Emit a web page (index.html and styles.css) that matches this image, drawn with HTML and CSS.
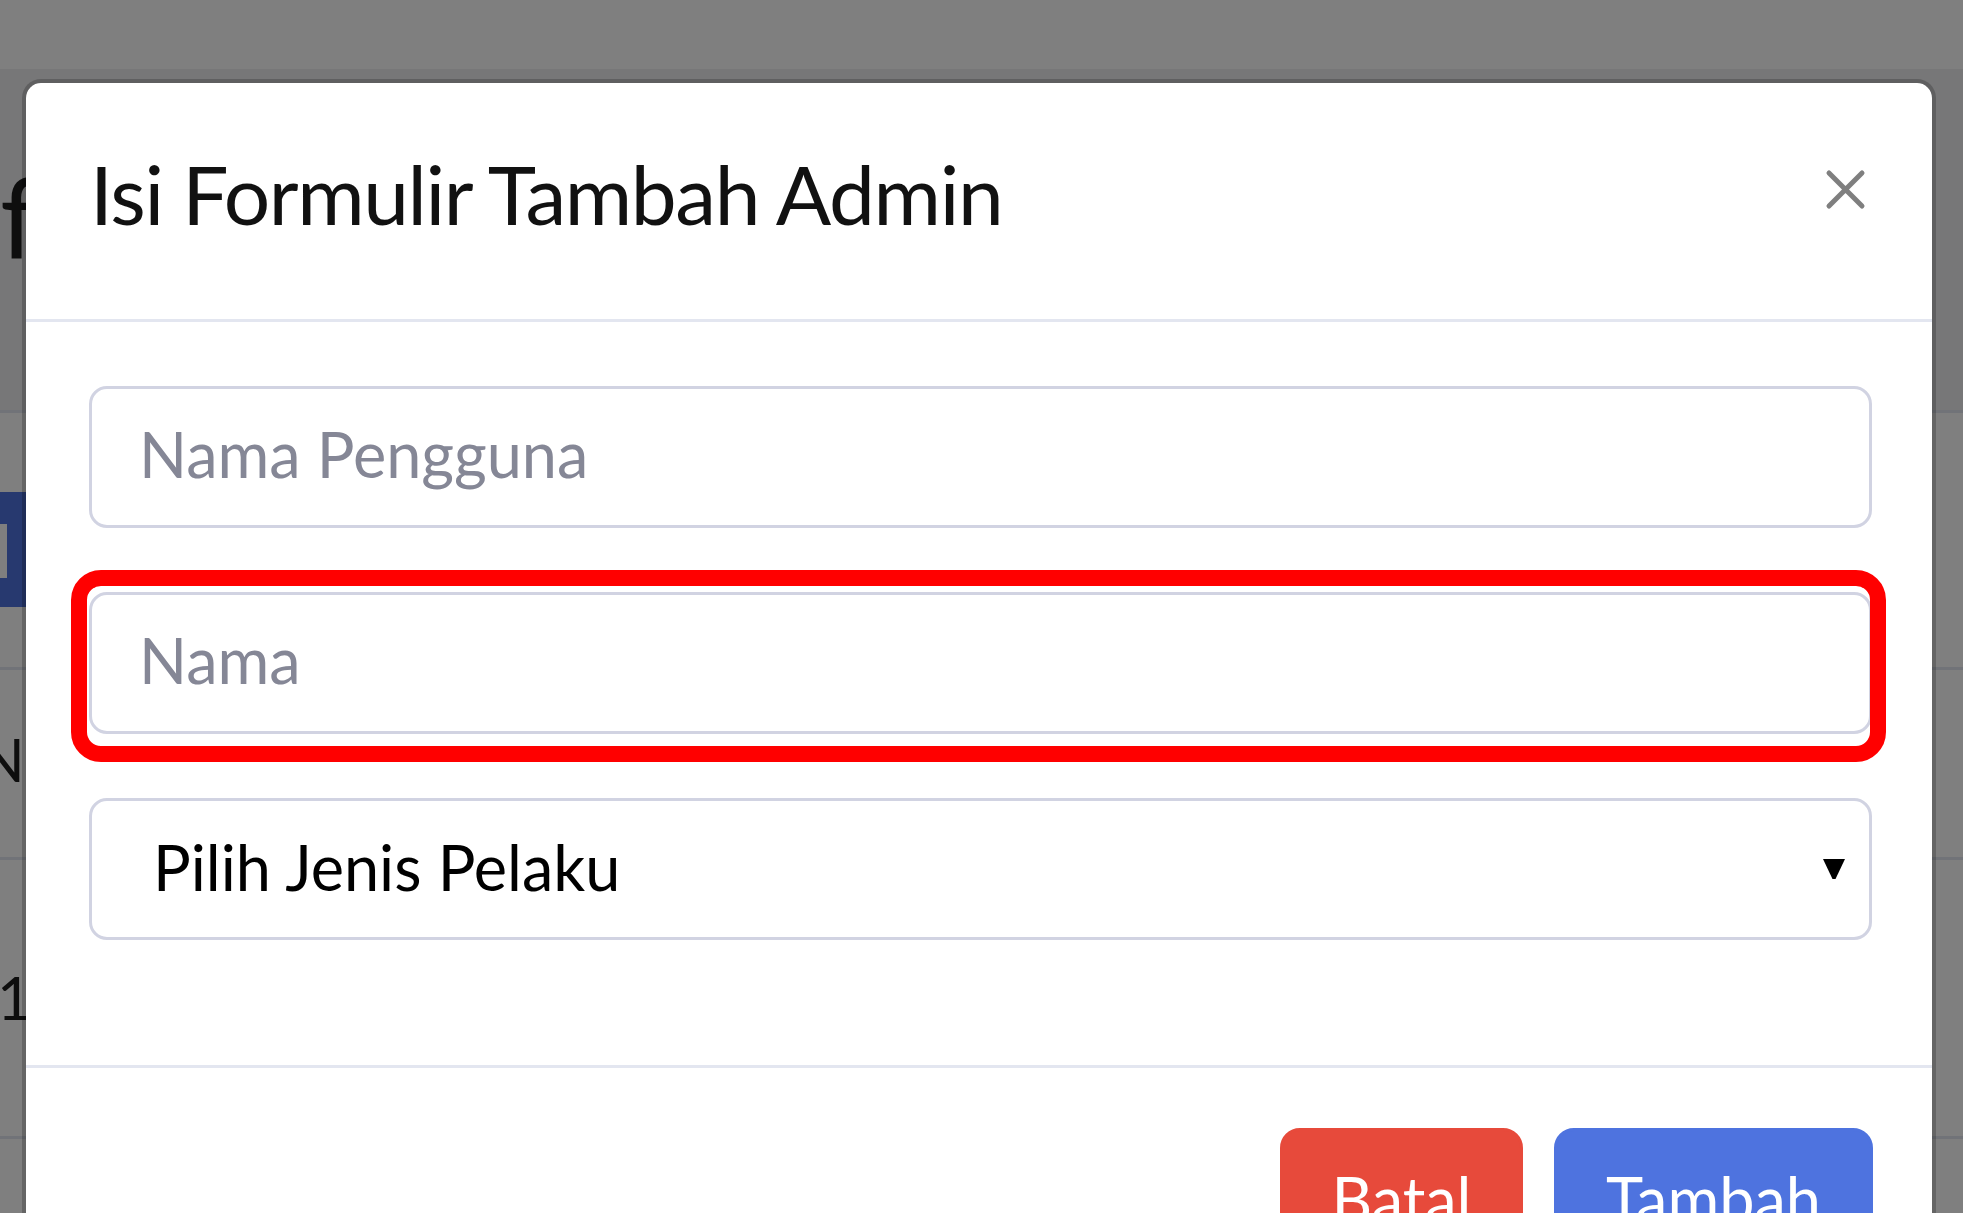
FILE: index.html
```html
<!DOCTYPE html>
<html lang="id">
<head>
<meta charset="utf-8">
<title>Tambah Admin</title>
<link rel="stylesheet" href="styles.css">
</head>
<body>
<div class="page">
  <header class="topbar"></header>
  <section class="page-head"><h1 class="page-title">f</h1></section>
  <div class="toolbar"><span class="btn-add"><span class="btn-add-icon"></span></span></div>
  <div class="table-row head-row"><span class="cell head-cell">N</span></div>
  <div class="table-row body-row"><span class="cell">1</span></div>
  <div class="table-row"></div>
</div>
<div class="backdrop"></div>
<div class="modal">
  <div class="modal-content">
    <div class="modal-header">
      <h5 class="modal-title">Isi Formulir Tambah Admin</h5>
      <button class="close" type="button" aria-label="Close">
        <svg width="41" height="41" viewBox="0 0 41 41"><path d="M4 4 L37 37 M37 4 L4 37" stroke="#7f7f7f" stroke-width="5" stroke-linecap="round" fill="none"/></svg>
      </button>
    </div>
    <form class="modal-body">
      <div class="form-group"><input class="form-control" type="text" placeholder="Nama Pengguna"></div>
      <div class="form-group highlighted"><input class="form-control" type="text" placeholder="Nama"><span class="highlight"></span></div>
      <div class="form-group select-wrap">
        <select class="form-control form-select"><option>Pilih Jenis Pelaku</option></select>
        <svg class="caret" width="22" height="22" viewBox="0 0 22 22"><polygon points="0,1 22,1 12.5,21 9.5,21" fill="#000"/></svg>
      </div>
    </form>
    <div class="modal-footer">
      <button class="btn btn-danger" type="button">Batal</button>
      <button class="btn btn-primary" type="button">Tambah</button>
    </div>
  </div>
</div>
</body>
</html>
```
FILE: styles.css
```css
* { box-sizing: border-box; }
html, body { margin: 0; padding: 0; }
body {
  width: 1963px;
  height: 1213px;
  overflow: hidden;
  position: relative;
  background: #fff;
  font-family: "Lato", "Nunito", sans-serif;
}

/* page behind the modal */
.page { color: #1c1c1c; }
.topbar { height: 69px; background: #fff; }
.page-head {
  height: 344px;
  background: #eeeef0;
  border-bottom: 3px solid #e3e6f0;
  padding-top: 80px;
  overflow: hidden;
}
.page-title { margin: 0; font-size: 112px; line-height: 134px; font-weight: 400; }
.toolbar {
  height: 257px;
  border-bottom: 3px solid #e3e6f0;
  padding-top: 79px;
}
.btn-add {
  display: flex;
  align-items: center;
  width: 120px;
  height: 115px;
  background: #4e73df;
  padding-top: 2px;
}
.btn-add-icon { display: block; width: 7px; height: 54px; background: #fff; }
.table-row { border-bottom: 3px solid #e3e6f0; height: 279px; }
.head-row { height: 190px; padding-top: 41px; }
.body-row { padding-top: 89px; }
.cell { display: block; font-size: 60px; line-height: 96px; }
.head-cell { margin-left: -21px; }
.body-row .cell { margin-left: -3px; }

.backdrop { position: fixed; inset: 0; background: rgba(0, 0, 0, 0.5); }

/* modal */
.modal { position: absolute; top: 79px; left: 22px; width: 1914px; }
.modal-content {
  background: #fff;
  background-clip: padding-box;
  border: 4px solid rgba(0, 0, 0, 0.2);
  border-radius: 19px;
}
.modal-header {
  display: flex;
  align-items: flex-start;
  padding: 62px 66px 78px 64px;
  border-bottom: 3px solid #e3e6f0;
}
.modal-title {
  margin: 0;
  font-size: 82px;
  line-height: 96px;
  font-weight: 400;
  letter-spacing: -1.4px;
  color: #111;
}
.close {
  margin: 24px 0 0 auto;
  padding: 0;
  border: 0;
  background: none;
  line-height: 0;
}
.modal-body { display: block; padding: 64px 60px 61px 63px; }
.form-group { margin-bottom: 64px; position: relative; }
.form-control {
  display: block;
  width: 100%;
  height: 142px;
  border: 3px solid #d1d3e2;
  border-radius: 18px;
  padding: 16px 43px 24px 47px;
  font-family: "Lato", "Nunito", sans-serif;
  font-size: 63px;
  line-height: 96px;
  color: #6e707e;
  background: #fff;
  outline: none;
}
.form-control::placeholder { color: #858796; opacity: 1; }
.form-select {
  -webkit-appearance: none;
  appearance: none;
  color: #000;
  padding: 18px 80px 22px 61px;
}
.caret { position: absolute; right: 27px; top: 60px; }
.highlight {
  position: absolute;
  top: -22px;
  left: -18px;
  right: -14px;
  bottom: -28px;
  border: 16px solid #ff0000;
  border-radius: 30px;
  pointer-events: none;
}

.modal-footer {
  display: flex;
  justify-content: flex-end;
  gap: 31px;
  padding: 60px 59px 0 0;
  border-top: 3px solid #e3e6f0;
}
.btn {
  height: 142px;
  border: 3px solid transparent;
  border-radius: 20px;
  padding: 20px 0;
  font-family: "Lato", "Nunito", sans-serif;
  font-size: 63px;
  line-height: 96px;
  color: #fff;
  text-align: center;
}
.btn-danger { width: 243px; background: #e74a3b; border-color: #e74a3b; }
.btn-primary { width: 319px; background: #4e73df; border-color: #4e73df; }
```
